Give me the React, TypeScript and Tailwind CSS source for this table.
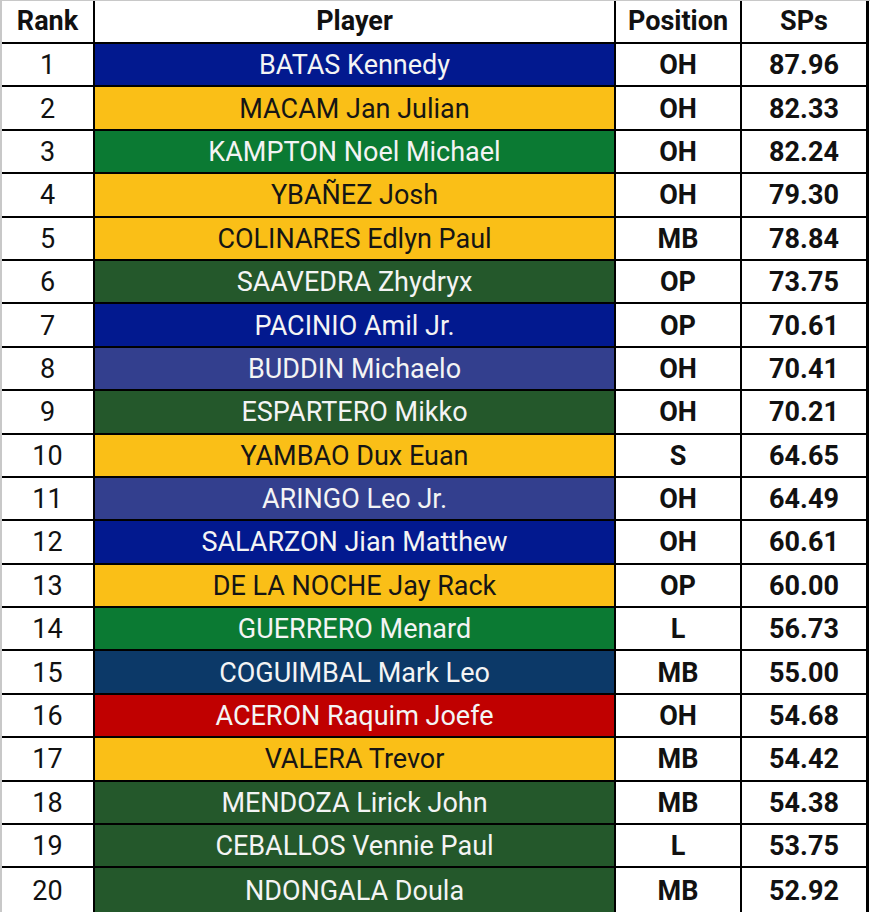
import React from "react";

type Row = { name: string; pos: string; sp: string; bg: string; dark: boolean };

const NAVY = "bg-[#02198f]";
const YEL = "bg-[#fabf17]";
const GRN = "bg-[#0b7a33]";
const DGRN = "bg-[#24582b]";
const MBLU = "bg-[#333f8e]";
const TEAL = "bg-[#0c3968]";
const RED = "bg-[#c00000]";

const rows: Row[] = [
  { name: "BATAS Kennedy", pos: "OH", sp: "87.96", bg: NAVY, dark: true },
  { name: "MACAM Jan Julian", pos: "OH", sp: "82.33", bg: YEL, dark: false },
  { name: "KAMPTON Noel Michael", pos: "OH", sp: "82.24", bg: GRN, dark: true },
  { name: "YBAÑEZ Josh", pos: "OH", sp: "79.30", bg: YEL, dark: false },
  { name: "COLINARES Edlyn Paul", pos: "MB", sp: "78.84", bg: YEL, dark: false },
  { name: "SAAVEDRA Zhydryx", pos: "OP", sp: "73.75", bg: DGRN, dark: true },
  { name: "PACINIO Amil Jr.", pos: "OP", sp: "70.61", bg: NAVY, dark: true },
  { name: "BUDDIN Michaelo", pos: "OH", sp: "70.41", bg: MBLU, dark: true },
  { name: "ESPARTERO Mikko", pos: "OH", sp: "70.21", bg: DGRN, dark: true },
  { name: "YAMBAO Dux Euan", pos: "S", sp: "64.65", bg: YEL, dark: false },
  { name: "ARINGO Leo Jr.", pos: "OH", sp: "64.49", bg: MBLU, dark: true },
  { name: "SALARZON Jian Matthew", pos: "OH", sp: "60.61", bg: NAVY, dark: true },
  { name: "DE LA NOCHE Jay Rack", pos: "OP", sp: "60.00", bg: YEL, dark: false },
  { name: "GUERRERO Menard", pos: "L", sp: "56.73", bg: GRN, dark: true },
  { name: "COGUIMBAL Mark Leo", pos: "MB", sp: "55.00", bg: TEAL, dark: true },
  { name: "ACERON Raquim Joefe", pos: "OH", sp: "54.68", bg: RED, dark: true },
  { name: "VALERA Trevor", pos: "MB", sp: "54.42", bg: YEL, dark: false },
  { name: "MENDOZA Lirick John", pos: "MB", sp: "54.38", bg: DGRN, dark: true },
  { name: "CEBALLOS Vennie Paul", pos: "L", sp: "53.75", bg: DGRN, dark: true },
  { name: "NDONGALA Doula", pos: "MB", sp: "52.92", bg: DGRN, dark: true },
];

export default function App() {
  return (
    <div
      className="w-[870px] h-[912px] overflow-hidden bg-white border-t border-l-2 border-[#c8c8c8] text-[27px] leading-none text-[#111]"
      style={{ fontFamily: "Roboto, 'Noto Sans', sans-serif" }}
    >
      <div className="w-[867px] border-r-[3px] border-black">
        <div className="flex h-[43px] border-b-2 border-black font-bold">
          <div className="w-[93px] border-r-2 border-black flex items-center justify-center">Rank</div>
          <div className="w-[521px] border-r-2 border-black flex items-center justify-center">Player</div>
          <div className="w-[126px] border-r-2 border-black flex items-center justify-center">Position</div>
          <div className="flex-1 flex items-center justify-center">SPs</div>
        </div>
        {rows.map((r, i) => (
          <div
            key={i}
            className={`flex h-[43.4px] ${i < rows.length - 1 ? "border-b-[2.5px]" : ""} border-black`}
          >
            <div className="w-[93px] border-r-2 border-black flex items-center justify-center pt-[2px]">{i + 1}</div>
            <div
              className={`w-[521px] border-r-2 border-black flex items-center justify-center pt-[2px] ${r.bg} ${
                r.dark ? "text-[#f4f4f4]" : "text-[#151515]"
              }`}
            >
              {r.name}
            </div>
            <div className="w-[126px] border-r-2 border-black flex items-center justify-center font-bold pt-[2px]">{r.pos}</div>
            <div className="flex-1 flex items-center justify-center font-bold pt-[2px]">{r.sp}</div>
          </div>
        ))}
      </div>
    </div>
  );
}
